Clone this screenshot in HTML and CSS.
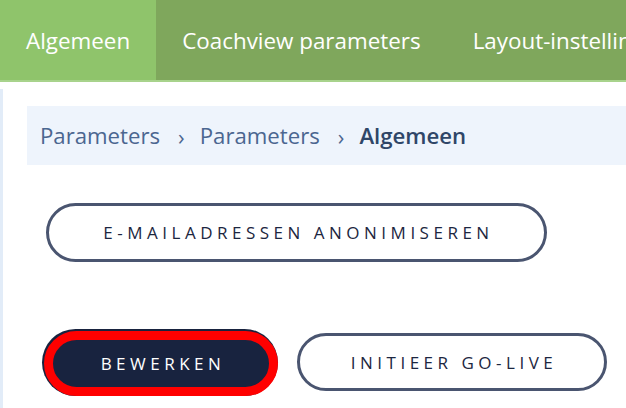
FILE: index.html
```html
<!DOCTYPE html>
<html lang="nl">
<head>
  <meta charset="UTF-8">
  <title>Parameters - Algemeen</title>
  <link rel="stylesheet" href="styles.css">
</head>
<body>

<nav class="tabs">
  <a class="tab active" href="#">Algemeen</a>
  <a class="tab" href="#">Coachview parameters</a>
  <a class="tab" href="#">Layout-instellingen</a>
</nav>

<main class="content">
  <div class="breadcrumb">
    <a href="#">Parameters</a>
    <span class="sep">&rsaquo;</span>
    <a href="#">Parameters</a>
    <span class="sep">&rsaquo;</span>
    <strong>Algemeen</strong>
  </div>

  <div class="actions">
    <button class="btn">E-mailadressen anonimiseren</button>
  </div>

  <div class="actions row">
    <button class="btn primary marked">Bewerken</button>
    <button class="btn">Initieer go-live</button>
  </div>
</main>

</body>
</html>
```

FILE: styles.css
```css
html, body {
  overflow: hidden;
}
body {
  margin: 0;
  background: #fff;
  font-family: "Open Sans", Arial, sans-serif;
}
.tabs {
  display: flex;
  height: 80px;
  background: #7fa75c;
  border-bottom: 2px solid #a8d38c;
  white-space: nowrap;
  overflow: hidden;
}
.tab {
  display: flex;
  align-items: center;
  padding: 0 26px;
  color: #fff;
  font-size: 22.4px;
  text-decoration: none;
}
.tab.active {
  background: #8fc46b;
}
.content {
  margin-top: 7px;
  border-left: 3px solid #e2ecf8;
  padding: 17px 0 40px 24px;
}
.breadcrumb {
  display: flex;
  align-items: center;
  height: 59px;
  padding-left: 13px;
  background: #eef4fc;
  font-size: 22.2px;
  color: #4b6690;
  white-space: nowrap;
}
.breadcrumb a {
  color: #4b6690;
  text-decoration: none;
}
.breadcrumb .sep {
  margin: 0 15px 0 18px;
  font-size: 22px;
}
.breadcrumb strong {
  color: #2f4668;
  font-weight: 600;
}
.actions {
  display: flex;
  gap: 19px;
  margin-top: 38px;
  padding-left: 19px;
}
.actions.row {
  margin-top: 71px;
  padding-left: 17px;
}
.btn {
  height: 59px;
  padding: 0 0 0 4px;
  width: 501px;
  background: #fff;
  border: 3px solid #4a5570;
  border-radius: 30px;
  color: #1c2640;
  font-family: "Open Sans", Arial, sans-serif;
  font-size: 17px;
  letter-spacing: 4.5px;
  text-transform: uppercase;
  cursor: pointer;
}
.btn.primary {
  background: #18233f;
  color: #fff;
  font-weight: 500;
}
/* red highlight ring round the edit button */
.btn.marked {
  height: 65px;
  width: 234px;
  border: 9px solid #ff0000;
  border-radius: 34px;
  box-shadow: -1px -1px 0 1px #18233f;
  margin-top: -2px;
}
.actions.row .btn:last-child {
  width: 310px;
  height: 58px;
}
```
